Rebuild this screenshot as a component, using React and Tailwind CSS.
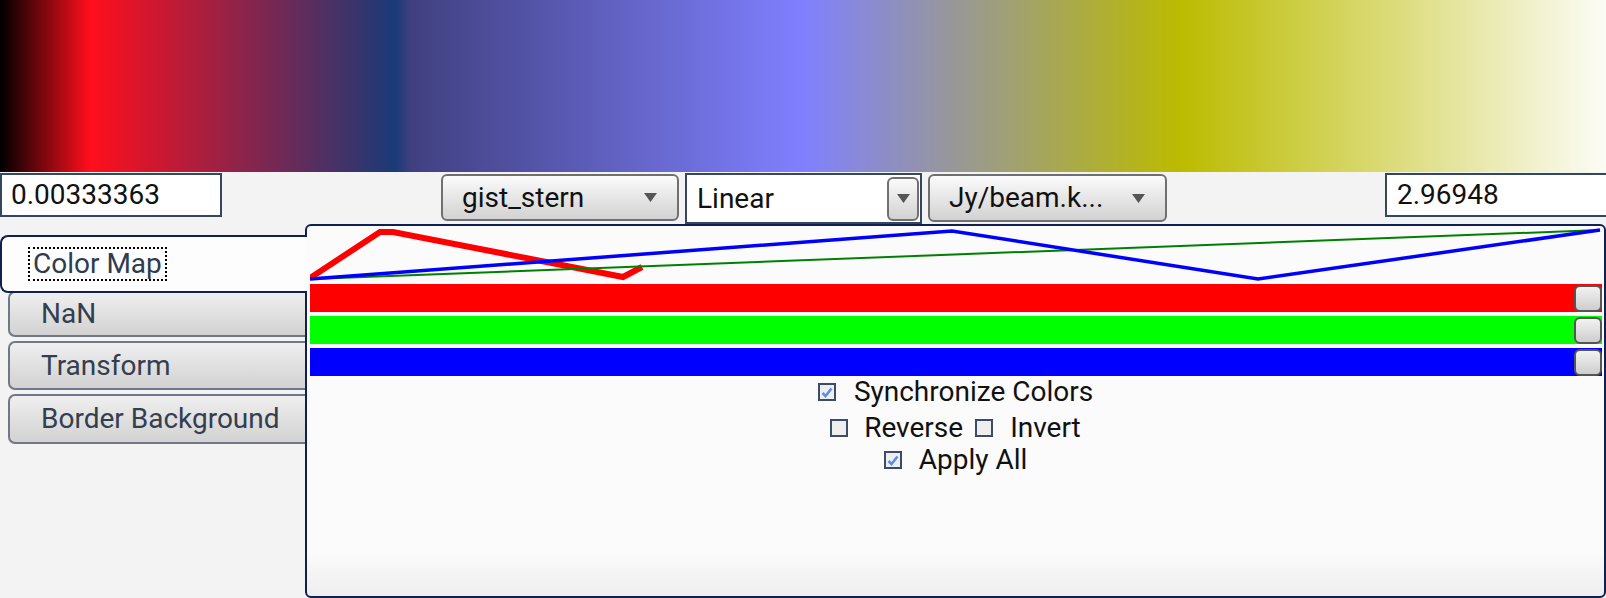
import React from "react";

const Arrow = ({ className = "" }) => (
  <svg width="13" height="9" viewBox="0 0 13 9" className={className}>
    <path d="M0 0 L13 0 L6.5 9 Z" fill="#555" />
  </svg>
);

const SelectButton = ({ label, className = "" }) => (
  <div
    className={`flex items-center justify-between rounded-[6px] border-2 border-[#707070] bg-gradient-to-b from-[#fbfbfb] to-[#d2d2d2] pl-[19px] pr-[20px] ${className}`}
  >
    <span className="text-[28px] leading-[30px] text-[#111]">{label}</span>
    <Arrow />
  </div>
);

const Checkbox = ({ checked }) => (
  <span className="flex h-[18px] w-[18px] shrink-0 items-center justify-center border-2 border-[#3b4b68] bg-[#eeeeee]">
    {checked && (
      <svg width="12" height="11" viewBox="0 0 12 11">
        <path
          d="M1.5 6 L4.5 9 L10.5 1.5"
          fill="none"
          stroke="#5b8fe6"
          strokeWidth="2.6"
        />
      </svg>
    )}
  </span>
);

const Tab = ({ label, className = "" }) => (
  <div
    className={`ml-[8px] flex w-[297px] items-center rounded-l-[7px] border-2 border-r-0 border-[#707888] bg-gradient-to-b from-[#efefef] to-[#d2d2d2] pl-[31px] ${className}`}
  >
    <span className="text-[28px] leading-[30px] text-[#343e4e]">{label}</span>
  </div>
);

const ColorBar = ({ color }) => (
  <div className={`relative h-[28px] w-[1292px] ${color}`}>
    <div className="absolute right-0 top-[1px] h-[27px] w-[28px] rounded-[6px] border-2 border-[#555] bg-gradient-to-b from-[#f2f2f2] to-[#cdcdcd]" />
  </div>
);

export default function App() {
  return (
    <div className="h-[598px] w-[1606px] overflow-hidden bg-[#f3f3f3] font-[Roboto,sans-serif]">
      {/* colour map preview */}
      <div className="h-[172px] w-full bg-[linear-gradient(to_right,#000_0%,#ff0e1c_5.6%,#1a3a78_24.6%,#2a3c7c_25%,#404080_25.6%,#8080ff_50%,#bbbb00_73.5%,#fcfcf6_100%)]" />

      {/* controls row */}
      <div className="flex h-[52px] items-start">
        <div className="mt-[1px] flex h-[44px] w-[222px] items-center border-2 border-[#34475f] bg-white pl-[9px]">
          <span className="text-[28px] leading-[30px] text-[#111]">0.00333363</span>
        </div>
        <SelectButton label="gist_stern" className="ml-[219px] mt-[2px] h-[47px] w-[238px]" />
        <div className="ml-[6px] mt-[1px] flex h-[51px] w-[237px] items-center justify-between border-2 border-[#34475f] bg-white pl-[10px] pr-[1px]">
          <span className="text-[28px] leading-[30px] text-[#111]">Linear</span>
          <div className="flex h-[44px] w-[32px] items-center justify-center rounded-[6px] border-2 border-[#707070] bg-gradient-to-b from-[#fbfbfb] to-[#d2d2d2]">
            <Arrow />
          </div>
        </div>
        <SelectButton label="Jy/beam.k..." className="ml-[6px] mt-[2px] h-[48px] w-[239px]" />
        <div className="ml-[218px] mt-[1px] flex h-[44px] flex-1 items-center border-2 border-r-0 border-[#34475f] bg-white pl-[10px]">
          <span className="text-[28px] leading-[30px] text-[#111]">2.96948</span>
        </div>
      </div>

      {/* tabs + panel */}
      <div className="flex h-[374px]">
        <div className="flex w-[305px] shrink-0 flex-col pt-[11px]">
          <div className="relative z-10 flex h-[58px] w-[307px] items-center rounded-l-[8px] border-2 border-r-0 border-[#102050] bg-[#fdfdfd]">
            <span className="ml-[26px] border-2 border-dotted border-black px-[3px] py-[1px] text-[28px] leading-[28px] text-[#2e3b50]">
              Color Map
            </span>
          </div>
          <Tab label="NaN" className="mt-[-2px] h-[46px]" />
          <Tab label="Transform" className="mt-[4px] h-[49px]" />
          <Tab label="Border Background" className="mt-[4px] h-[50px]" />
        </div>

        <div className="flex w-[1301px] flex-col rounded-[6px] border-2 border-[#102050] bg-[linear-gradient(to_bottom,#fbfbfb_0%,#fbfbfb_88%,#eeeeee_100%)] pl-[3px]">
          <svg width="1294" height="55" className="block">
            <polyline
              points="0,52 70,6 83,6 313,51 332,41"
              fill="none"
              stroke="#ff0000"
              strokeWidth="6"
            />
            <polyline points="0,53 1290,4" fill="none" stroke="#008000" strokeWidth="2" />
            <polyline
              points="0,53 642,5 948,53 1290,4"
              fill="none"
              stroke="#0000ff"
              strokeWidth="3.5"
            />
          </svg>

          <div className="mt-[3px] flex flex-col gap-[4px]">
            <ColorBar color="bg-[#ff0000]" />
            <ColorBar color="bg-[#00ff00]" />
            <ColorBar color="bg-[#0000ff]" />
          </div>

          <div className="flex flex-col items-center pr-[3px] text-[28px] leading-[30px] text-[#111]">
            <label className="mt-[1px] flex h-[30px] items-center gap-[18px]">
              <Checkbox checked />
              <span>Synchronize Colors</span>
            </label>
            <div className="mt-[6px] flex h-[30px] items-center">
              <label className="flex items-center gap-[16px]">
                <Checkbox />
                <span>Reverse</span>
              </label>
              <label className="ml-[12px] flex items-center gap-[17px]">
                <Checkbox />
                <span>Invert</span>
              </label>
            </div>
            <label className="mt-[2px] flex h-[30px] items-center gap-[17px]">
              <Checkbox checked />
              <span>Apply All</span>
            </label>
          </div>
        </div>
      </div>
    </div>
  );
}
